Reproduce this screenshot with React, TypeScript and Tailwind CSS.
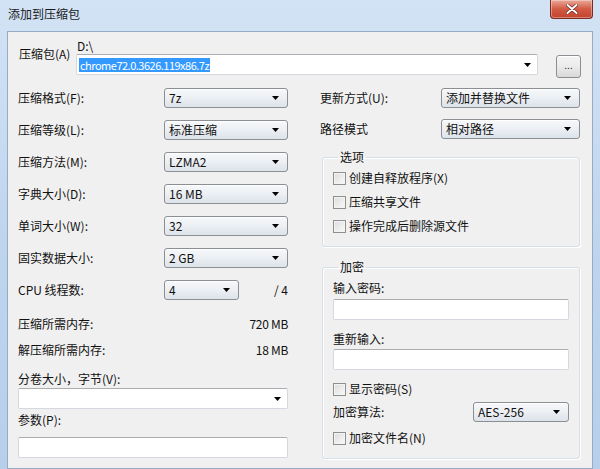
import React from 'react';

const Arrow = () => (
  <svg width="7" height="4" viewBox="0 0 7 4" className="shrink-0">
    <path d="M0 0h7L3.5 4z" fill="#000" />
  </svg>
);

function Select({ value, className = '' }: { value: string; className?: string }) {
  return (
    <div
      className={
        'h-[20px] flex items-center justify-between pl-[4px] pr-[8px] rounded-[3px] border border-[#8b8e92] bg-gradient-to-b from-[#f6f8fa] via-[#eceff3] to-[#dce3ea] shadow-[inset_0_1px_0_#fff] ' +
        className
      }
    >
      <span className="leading-[14px]">{value}</span>
      <Arrow />
    </div>
  );
}

function TextBox({ className = '', children }: { className?: string; children?: React.ReactNode }) {
  return (
    <div
      className={
        'h-[21px] bg-white border border-[#d5d8de] border-t-[#abadb3] rounded-[2px] flex items-center ' + className
      }
    >
      {children}
    </div>
  );
}

function Check({ label, className = '' }: { label: React.ReactNode; className?: string }) {
  return (
    <div className={'h-[16px] flex items-center gap-[3px] ' + className}>
      <span className="w-[13px] h-[13px] border border-[#8e8f8f] bg-gradient-to-br from-[#dcdcdc] to-[#fafafa] shadow-[inset_0_0_0_1px_#f4f4f4]" />
      <span className="leading-[14px]">{label}</span>
    </div>
  );
}

function Row({ label, value }: { label: string; value: string }) {
  return (
    <div className="h-[20px] flex items-center mb-[12px]">
      <span className="w-[146px] leading-[14px]">{label}</span>
      <Select value={value} className="w-[124px]" />
    </div>
  );
}

export default function App() {
  return (
    <div className="w-[600px] h-[469px] overflow-hidden flex flex-col bg-gradient-to-b from-[#d3e3f5] via-[#bfd5ee] to-[#b7cfea] text-[12px] text-[#111] font-['Noto_Sans_CJK_SC','Liberation_Sans',sans-serif]">
      {/* title bar */}
      <div className="h-[31px] shrink-0 flex items-start justify-between">
        <span className="ml-[8px] mt-[6px] leading-[16px] text-[12px] text-[#1a1a1a]">添加到压缩包</span>
        <div className="mr-[7px] w-[43px] h-[19px] rounded-b-[4px] border border-t-0 border-[#7a2c20] bg-gradient-to-b from-[#e8a898] via-[#d25a45] to-[#c2432c] shadow-[inset_0_0_0_1px_rgba(255,255,255,0.35)] flex items-center justify-center">
          <svg width="12" height="10" viewBox="0 0 12 10">
            <path d="M1.5 1l9 8M10.5 1l-9 8" stroke="#5a1a10" strokeWidth="3.2" strokeLinecap="round" />
            <path d="M1.5 1l9 8M10.5 1l-9 8" stroke="#fff" strokeWidth="2" strokeLinecap="round" />
          </svg>
        </div>
      </div>

      {/* client area */}
      <div className="flex-1 mx-[7px] border border-[#95abc6] bg-[#f0f0f0] flex flex-col">
        {/* archive */}
        <div className="h-[56px] shrink-0 flex items-start pl-[11px]">
          <span className="w-[57px] mt-[14px] leading-[16px]">压缩包(A)</span>
          <div className="w-[462px] flex flex-col mt-[6px]">
            <span className="leading-[16px] ml-[1px]">D:\</span>
            <TextBox className="justify-between pl-[2px] pr-[6px]">
              <span className="bg-[#3399ff] text-white text-[11px] tracking-[-0.5px] leading-[14px] px-[1px]">chrome72.0.3626.119x86.7z</span>
              <Arrow />
            </TextBox>
          </div>
          <div className="ml-[18px] mt-[23px] w-[25px] h-[23px] rounded-[3px] border border-[#8b8e92] bg-gradient-to-b from-[#f4f4f4] via-[#ebebeb] to-[#d9d9d9] shadow-[inset_0_1px_0_#fff] flex items-center justify-center text-[10px] leading-[10px] text-[#333] pb-[3px]">
            ...
          </div>
        </div>

        <div className="flex pl-[10px]">
          {/* left column */}
          <div className="w-[270px] flex flex-col">
            <Row label="压缩格式(F):" value="7z" />
            <Row label="压缩等级(L):" value="标准压缩" />
            <Row label="压缩方法(M):" value="LZMA2" />
            <Row label="字典大小(D):" value="16 MB" />
            <Row label="单词大小(W):" value="32" />
            <Row label="固实数据大小:" value="2 GB" />
            <div className="h-[20px] flex items-center">
              <span className="w-[146px] leading-[14px]">CPU 线程数:</span>
              <Select value="4" className="w-[75px]" />
              <span className="ml-auto leading-[14px]">/ 4</span>
            </div>
            <div className="h-[16px] mt-[16px] flex items-center justify-between">
              <span className="leading-[14px]">压缩所需内存:</span>
              <span className="leading-[14px] tracking-[-0.3px]">720 MB</span>
            </div>
            <div className="h-[16px] mt-[10px] flex items-center justify-between">
              <span className="leading-[14px]">解压缩所需内存:</span>
              <span className="leading-[14px] tracking-[-0.3px]">18 MB</span>
            </div>
            <div className="h-[16px] mt-[13px] flex items-center">
              <span className="leading-[14px]">分卷大小，字节(V):</span>
            </div>
            <TextBox className="mt-[1px] h-[20px] justify-end pr-[6px]">
              <Arrow />
            </TextBox>
            <div className="h-[16px] mt-[3px] flex items-center">
              <span className="leading-[14px]">参数(P):</span>
            </div>
            <TextBox className="mt-[9px]" />
          </div>

          {/* right column */}
          <div className="ml-[32px] w-[260px] flex flex-col">
            <div className="h-[20px] flex items-center">
              <span className="w-[121px] leading-[14px]">更新方式(U):</span>
              <Select value="添加并替换文件" className="w-[139px]" />
            </div>
            <div className="h-[20px] mt-[11px] flex items-center">
              <span className="w-[121px] leading-[14px]">路径模式</span>
              <Select value="相对路径" className="w-[139px]" />
            </div>

            <fieldset className="ml-[2px] mt-[11px] w-[258px] border border-[#d5dfe5] rounded-[3px] shadow-[inset_1px_1px_0_#fff,1px_1px_0_#fff] px-[10px] pb-[12px] flex flex-col gap-[8px]">
              <legend className="ml-[5px] px-[2px] leading-[14px]">选项</legend>
              <Check label="创建自释放程序(X)" className="mt-[6px]" />
              <Check label="压缩共享文件" />
              <Check label="操作完成后删除源文件" />
            </fieldset>

            <fieldset className="ml-[2px] mt-[13px] w-[258px] border border-[#d5dfe5] rounded-[3px] shadow-[inset_1px_1px_0_#fff,1px_1px_0_#fff] px-[10px] pb-[12px] flex flex-col">
              <legend className="ml-[5px] px-[2px] leading-[14px]">加密</legend>
              <div className="h-[16px] mt-[6px] flex items-center">
                <span className="leading-[14px]">输入密码:</span>
              </div>
              <TextBox className="mt-[3px]" />
              <div className="h-[16px] mt-[11px] flex items-center">
                <span className="leading-[14px]">重新输入:</span>
              </div>
              <TextBox className="mt-[2px]" />
              <div className="mt-[11px]">
                <Check label="显示密码(S)" />
              </div>
              <div className="h-[20px] mt-[5px] flex items-center">
                <span className="w-[140px] leading-[14px]">加密算法:</span>
                <Select value="AES-256" className="w-[96px]" />
              </div>
              <div className="mt-[8px]">
                <Check label="加密文件名(N)" />
              </div>
            </fieldset>
          </div>
        </div>
      </div>
    </div>
  );
}
